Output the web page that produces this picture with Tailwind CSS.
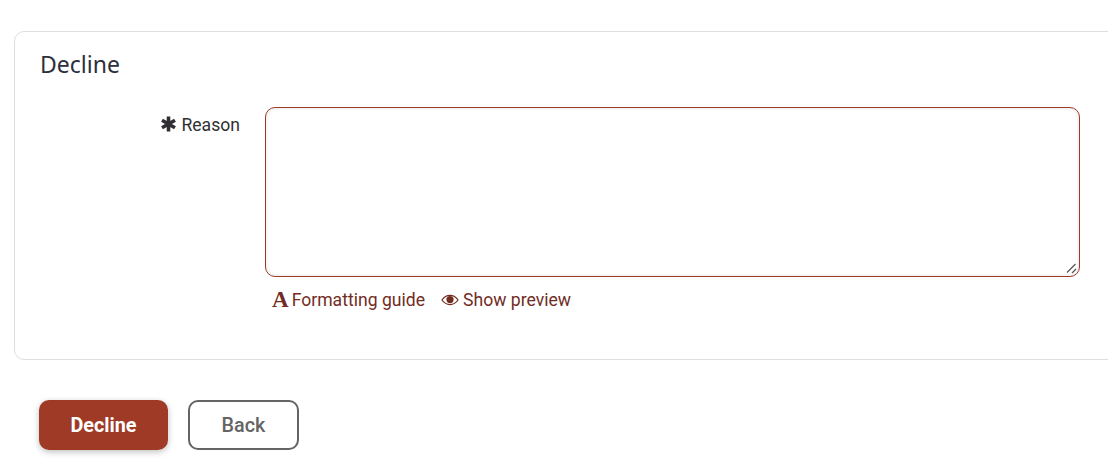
<!DOCTYPE html>
<html lang="en">
<head>
  <meta charset="UTF-8" />
  <title>Decline</title>
  <script src="https://cdn.jsdelivr.net/npm/@tailwindcss/browser@4"></script>
</head>
<body class="bg-white font-['Roboto',sans-serif] text-[#2f2f33] overflow-hidden">
  <div class="h-[465px] w-[1108px] overflow-hidden pt-[31px] pl-[14px]">
    <section class="w-[1110px] h-[329px] border border-[#dedede] rounded-[10px] pl-[25px] pt-[16px]">
      <h2 class="font-['Noto_Sans',sans-serif] text-[23px] leading-[32px] text-[#2d2f3a]">Decline</h2>
      <form class="flex mt-[27px]">
        <label class="w-[200px] flex justify-end items-start gap-[5px] pt-[6px] text-[17.6px] leading-[24px]">
          <svg class="w-[15px] h-[16px] mt-[3px]" viewBox="0 0 15 16" fill="none" stroke="#2f2f33" stroke-width="3.600"><path d="M7.500 .5v15M1 4.200l13 7.600M14 4.200 1 11.800"/></svg>
          <span>Reason</span>
        </label>
        <div class="ml-[25px] w-[815px]">
          <div class="relative h-[170px] border border-[#9e3a26] rounded-[10px] bg-white shadow-[inset_0_0_4px_rgba(0,0,0,0.12)]">
            <svg class="absolute right-[1px] bottom-[1px] w-[12px] h-[12px]" viewBox="0 0 12 12" fill="none" stroke="#555" stroke-width="1.200"><path d="M1 9.500 9.500 1M6 10l4-4"/></svg>
          </div>
          <div class="flex items-center mt-[11px] pl-[7px] text-[17.6px] leading-[24px] text-[#722c1f]">
            <a class="flex items-center gap-[3px]">
              <span class="font-['Liberation_Serif',serif] font-bold text-[23px] leading-[24px]">A</span>
              <span>Formatting guide</span>
            </a>
            <a class="flex items-center gap-[4px] ml-[16px]">
              <svg class="w-[18px] h-[14px]" viewBox="0 0 19 14" fill="none"><path d="M1 7c2.200-3.200 5-4.800 8.500-4.800S15.800 3.800 18 7c-2.200 3.200-5 4.800-8.500 4.800S3.200 10.200 1 7z" stroke="#722c1f" stroke-width="1.300"/><circle cx="9.500" cy="6.500" r="3.800" fill="#722c1f"/></svg>
              <span>Show preview</span>
            </a>
          </div>
        </div>
      </form>
    </section>
    <div class="flex gap-[20px] mt-[40px] ml-[25px]">
      <button class="w-[129px] h-[50px] pt-[2px] rounded-[10px] bg-[#9e3a26] text-white font-bold text-[19.8px] shadow-[0_2px_6px_rgba(0,0,0,0.25)]">Decline</button>
      <button class="w-[111px] h-[50px] pt-[2px] rounded-[10px] border-2 border-[#646464] bg-white text-[#646464] font-medium text-[19.8px]">Back</button>
    </div>
  </div>
</body>
</html>
